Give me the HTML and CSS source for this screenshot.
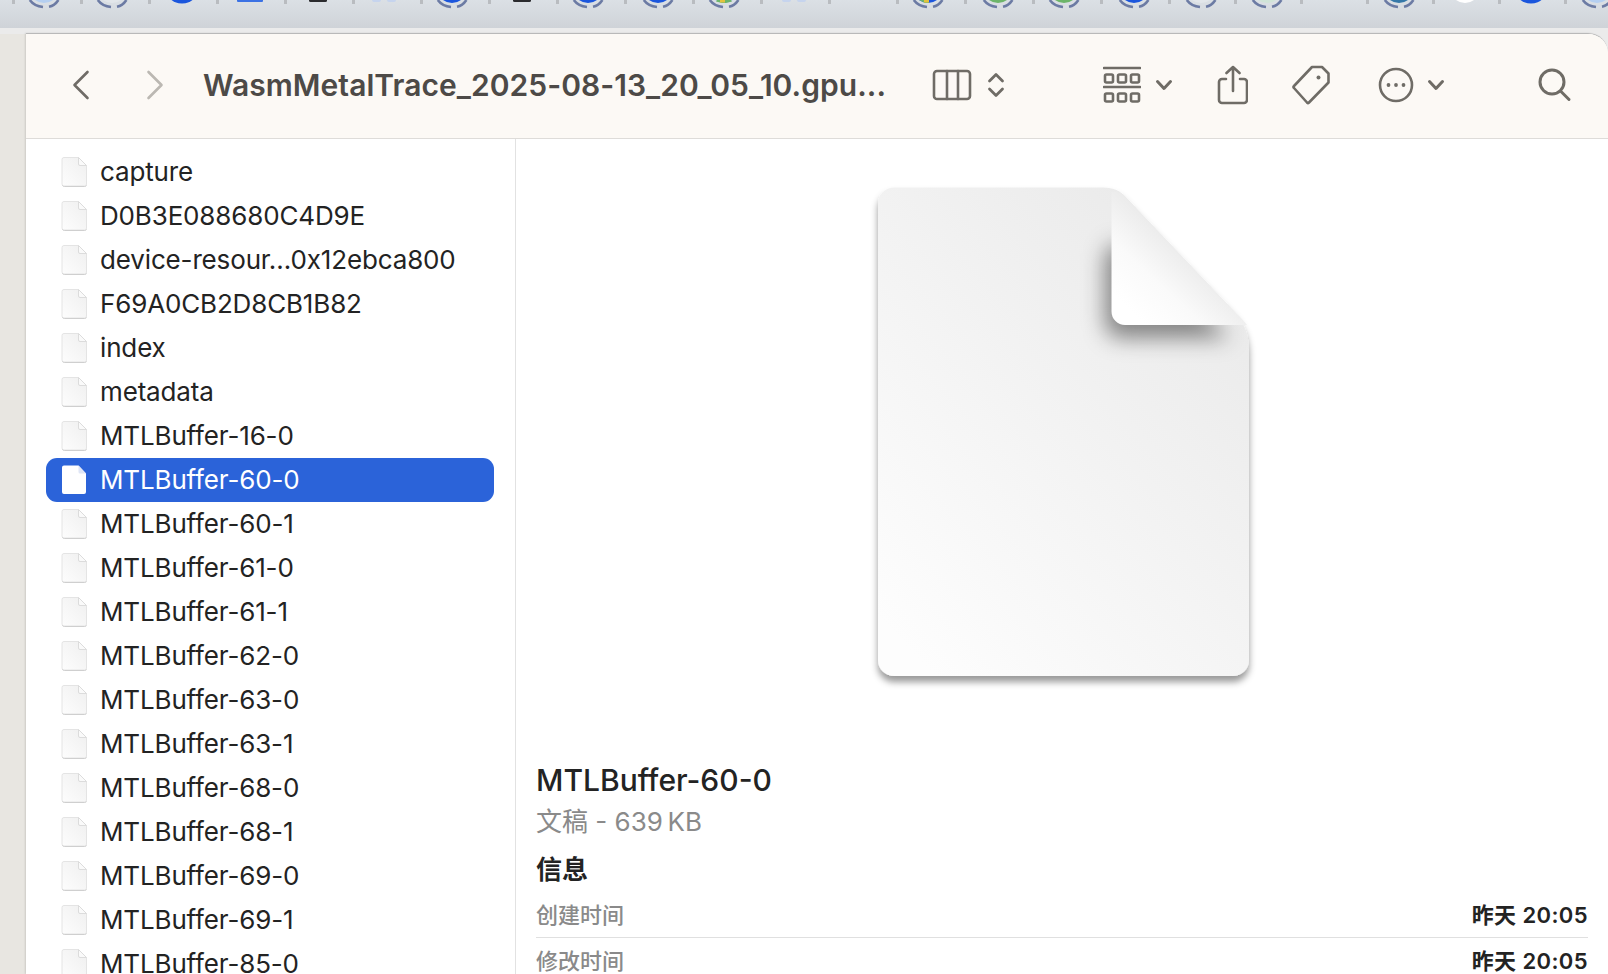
FILE: index.html
```html
<!doctype html>
<html>
<head>
    <meta charset="utf-8" />
    <title>WasmMetalTrace</title>
    <link rel="stylesheet" href="styles.css">
</head>
<body>
<svg class="defs" width="0" height="0">
    <defs>
        <linearGradient id="smallPage" x1="1" y1="0" x2="0" y2="1">
            <stop offset="0" stop-color="#efefef"/>
            <stop offset="1" stop-color="#fdfdfd"/>
        </linearGradient>
        <linearGradient id="bigPage" x1="0.95" y1="0" x2="0.15" y2="1">
            <stop offset="0" stop-color="#e8e8e8"/>
            <stop offset="1" stop-color="#fdfdfd"/>
        </linearGradient>
        <linearGradient id="bigFold" x1="0.15" y1="0.9" x2="0.72" y2="0.3">
            <stop offset="0" stop-color="#ffffff"/>
            <stop offset="0.35" stop-color="#fafafa"/>
            <stop offset="1" stop-color="#e0e0e0"/>
        </linearGradient>
        <filter id="pageShadow" x="-10%" y="-10%" width="120%" height="120%">
            <feDropShadow dx="0" dy="6" stdDeviation="3.500" flood-color="#000" flood-opacity=".4"/>
        </filter>
        <filter id="foldBlur" x="-40%" y="-40%" width="180%" height="180%">
            <feGaussianBlur stdDeviation="11"/>
        </filter>
        <clipPath id="pageClip">
            <path d="M36 17.500H242C252 17.500 260 19 265.700 25L372 137C383 148 391 160 391 180V490A16 16 0 0 1 375 506H36A16 16 0 0 1 20 490V33.500A16 16 0 0 1 36 17.500Z"/>
        </clipPath>
        <symbol id="ring" viewBox="0 0 40 28">
            <path class="ring-arc" d="M5.800 0C8.500 3.800 13 6.400 19 7"/>
            <path class="ring-arc" d="M25 6.800C29 6 32 3.600 34.400 0"/>
        </symbol>
        <symbol id="fileSmall" viewBox="0 0 28 32">
            <path d="M2 3.500A2 2 0 0 1 4 1.500H18.500L26.500 9.500V28A2 2 0 0 1 24.500 30H4A2 2 0 0 1 2 28Z" fill="url(#smallPage)" stroke="#e4e4e4" stroke-width="1"/>
            <path d="M2.500 29.500C3 30.400 3.500 30.500 4.500 30.500H24.500C25.500 30.500 26 30.400 26.500 29.500" fill="none" stroke="#cfcfcf" stroke-width="1"/>
            <path d="M18.500 1.500V8A1.500 1.500 0 0 0 20 9.500H26.500Z" fill="#fafafa" stroke="#dcdcdc" stroke-width="1"/>
        </symbol>
        <symbol id="fileSelected" viewBox="0 0 28 32">
            <path d="M2 3.500A2 2 0 0 1 4 1.500H18.500L26 9.500V28A2 2 0 0 1 24 30H4A2 2 0 0 1 2 28Z" fill="#fff"/>
            <path d="M18.500 1.500V8A1.500 1.500 0 0 0 20 9.500H26Z" fill="#dfe6f6"/>
        </symbol>
    </defs>
</svg>

<div class="tabs">
    <div class="tab"><svg class="fav ringed" viewBox="0 0 40 28"><circle class="c-sky" cx="20" cy="-12" r="15"/><use href="#ring"/></svg></div>
    <div class="tab"><svg class="fav ringed" viewBox="0 0 40 28"><circle class="c-mist" cx="20" cy="-12" r="15"/><use href="#ring"/></svg></div>
    <div class="tab"><svg class="fav" viewBox="0 0 40 28"><circle class="c-blue" cx="20" cy="-14" r="17.500"/></svg></div>
    <div class="tab"><svg class="fav" viewBox="0 0 40 28"><rect class="c-azure" x="7" y="-6" width="26" height="8" rx="1"/></svg></div>
    <div class="tab"><svg class="fav" viewBox="0 0 40 28"><rect class="c-dark" x="11" y="-6" width="18" height="8" rx="1.500"/></svg></div>
    <div class="tab"><svg class="fav ringed" viewBox="0 0 40 28"><rect class="c-pale" x="8" y="-6" width="9" height="8" rx="2"/><rect class="c-pale" x="23" y="-6" width="9" height="8" rx="2"/></svg></div>
    <div class="tab"><svg class="fav ringed" viewBox="0 0 40 28"><circle class="c-blue" cx="20" cy="-12" r="15"/><use href="#ring"/></svg></div>
    <div class="tab"><svg class="fav" viewBox="0 0 40 28"><rect class="c-dark" x="11" y="-6" width="18" height="8" rx="1.500"/></svg></div>
    <div class="tab"><svg class="fav ringed" viewBox="0 0 40 28"><circle class="c-blue" cx="20" cy="-12" r="15"/><use href="#ring"/></svg></div>
    <div class="tab"><svg class="fav" viewBox="0 0 40 28"><circle class="c-blue" cx="20" cy="-12" r="15"/><use href="#ring"/></svg></div>
    <div class="tab"><svg class="fav ringed" viewBox="0 0 40 28"><circle class="c-sky" cx="20" cy="-12" r="15"/><path class="c-green" d="M12 1.500L18 3H22L28 1.500L26 -2H14Z"/><rect class="c-gold" x="16" y="0" width="5" height="2.500"/><use href="#ring"/></svg></div>
    <div class="tab"><svg class="fav" viewBox="0 0 40 28"><rect class="c-pale" x="8" y="-6" width="9" height="8" rx="2"/><rect class="c-pale" x="23" y="-6" width="9" height="8" rx="2"/></svg></div>
    <div class="tab"></div>
    <div class="tab"><svg class="fav ringed" viewBox="0 0 40 28"><circle class="c-blue" cx="20" cy="-12" r="15"/><path class="c-green" d="M11 0L17 3H21L17 -2H11Z"/><rect class="c-gold" x="16" y="0" width="5" height="2.500"/><use href="#ring"/></svg></div>
    <div class="tab"><svg class="fav" viewBox="0 0 40 28"><circle class="c-green" cx="20" cy="-12" r="15"/><use href="#ring"/></svg></div>
    <div class="tab"><svg class="fav ringed" viewBox="0 0 40 28"><circle class="c-green" cx="20" cy="-12" r="15"/><use href="#ring"/></svg></div>
    <div class="tab"><svg class="fav" viewBox="0 0 40 28"><circle class="c-blue" cx="20" cy="-12" r="15"/><use href="#ring"/></svg></div>
    <div class="tab tab-narrow"><svg class="fav" viewBox="0 0 40 28"><circle class="c-mist" cx="20" cy="-12" r="15"/><use href="#ring"/></svg></div>
    <div class="tab tab-narrow"><svg class="fav" viewBox="0 0 40 28"><circle class="c-mint" cx="20" cy="-12" r="15"/><use href="#ring"/></svg></div>
    <div class="tab tab-narrow"></div>
    <div class="tab tab-narrow"><svg class="fav" viewBox="0 0 40 28"><circle class="c-teal" cx="20" cy="-12" r="15"/><use href="#ring"/></svg></div>
    <div class="tab tab-narrow"><svg class="fav" viewBox="0 0 40 28"><circle class="c-white" cx="20" cy="-12" r="15"/></svg></div>
    <div class="tab tab-narrow"><svg class="fav" viewBox="0 0 40 28"><circle class="c-blue" cx="20" cy="-14" r="17.500"/></svg></div>
    <div class="tab tab-narrow"><svg class="fav" viewBox="0 0 40 28"><circle class="c-sky" cx="20" cy="-12" r="15"/><use href="#ring"/></svg></div>
</div>
<div class="tabs-edge"></div>

<div class="desk">
    <div class="behind"></div>
    <div class="finder">
        <div class="toolbar">
            <svg class="tool back" width="18" height="30" viewBox="0 0 18 30"><path d="M15.500 2L2.500 15L15.500 28"/></svg>
            <svg class="tool forward" width="18" height="30" viewBox="0 0 18 30"><path d="M2.500 2L15.500 15L2.500 28"/></svg>
            <div class="path-title">WasmMetalTrace_2025-08-13_20_05_10.gpu...</div>
            <svg class="tool columns" width="40" height="32" viewBox="0 0 40 32"><rect x="2" y="2" width="36" height="28" rx="3"/><path d="M15 2V30M26 2V30"/></svg>
            <svg class="tool updown" width="18" height="30" viewBox="0 0 18 30"><path d="M2.500 11L9 4.500L15.500 11M2.500 19L9 25.500L15.500 19"/></svg>
            <svg class="tool grid" width="38" height="38" viewBox="0 0 38 38"><path d="M1 2H37M1 21H37"/><rect x="2" y="8.500" width="8" height="8" rx="1.500"/><rect x="15" y="8.500" width="8" height="8" rx="1.500"/><rect x="28" y="8.500" width="8" height="8" rx="1.500"/><rect x="2" y="27.500" width="8" height="8" rx="1.500"/><rect x="15" y="27.500" width="8" height="8" rx="1.500"/><rect x="28" y="27.500" width="8" height="8" rx="1.500"/></svg>
            <svg class="tool caret after-grid" width="18" height="12" viewBox="0 0 18 12"><path d="M2.500 2.500L9 9.500L15.500 2.500"/></svg>
            <svg class="tool share" width="32" height="40" viewBox="0 0 32 40"><path d="M10 14H6A3 3 0 0 0 3 17V35A3 3 0 0 0 6 38H28A3 3 0 0 0 31 35V17A3 3 0 0 0 28 14H24M17 26V2M10.500 8L17 2L23.500 8"/></svg>
            <svg class="tool tag" width="40" height="40" viewBox="0 0 40 40"><path d="M21 2H31L37.500 8.500V17.500L18 37.500Q17 38.500 16 37.500L3 23Q2 22 3 21Z"/><circle class="dot" cx="27.500" cy="12.500" r="2"/></svg>
            <svg class="tool more" width="36" height="36" viewBox="0 0 36 36"><circle cx="18" cy="18" r="16"/><circle class="dot" cx="10.500" cy="18" r="1.900"/><circle class="dot" cx="18" cy="18" r="1.900"/><circle class="dot" cx="25.500" cy="18" r="1.900"/></svg>
            <svg class="tool caret after-more" width="18" height="12" viewBox="0 0 18 12"><path d="M2.500 2.500L9 9.500L15.500 2.500"/></svg>
            <svg class="tool search" width="34" height="34" viewBox="0 0 34 34"><circle cx="14" cy="14" r="12"/><path d="M22.500 23L31 31.500"/></svg>
        </div>
        <div class="content">
            <ul class="files">
                <li class="file"><svg class="file-icon"><use href="#fileSmall"/></svg>capture</li>
                <li class="file"><svg class="file-icon"><use href="#fileSmall"/></svg>D0B3E088680C4D9E</li>
                <li class="file"><svg class="file-icon"><use href="#fileSmall"/></svg>device-resour…0x12ebca800</li>
                <li class="file"><svg class="file-icon"><use href="#fileSmall"/></svg>F69A0CB2D8CB1B82</li>
                <li class="file"><svg class="file-icon"><use href="#fileSmall"/></svg>index</li>
                <li class="file"><svg class="file-icon"><use href="#fileSmall"/></svg>metadata</li>
                <li class="file"><svg class="file-icon"><use href="#fileSmall"/></svg>MTLBuffer-16-0</li>
                <li class="file selected"><svg class="file-icon"><use href="#fileSelected"/></svg>MTLBuffer-60-0</li>
                <li class="file"><svg class="file-icon"><use href="#fileSmall"/></svg>MTLBuffer-60-1</li>
                <li class="file"><svg class="file-icon"><use href="#fileSmall"/></svg>MTLBuffer-61-0</li>
                <li class="file"><svg class="file-icon"><use href="#fileSmall"/></svg>MTLBuffer-61-1</li>
                <li class="file"><svg class="file-icon"><use href="#fileSmall"/></svg>MTLBuffer-62-0</li>
                <li class="file"><svg class="file-icon"><use href="#fileSmall"/></svg>MTLBuffer-63-0</li>
                <li class="file"><svg class="file-icon"><use href="#fileSmall"/></svg>MTLBuffer-63-1</li>
                <li class="file"><svg class="file-icon"><use href="#fileSmall"/></svg>MTLBuffer-68-0</li>
                <li class="file"><svg class="file-icon"><use href="#fileSmall"/></svg>MTLBuffer-68-1</li>
                <li class="file"><svg class="file-icon"><use href="#fileSmall"/></svg>MTLBuffer-69-0</li>
                <li class="file"><svg class="file-icon"><use href="#fileSmall"/></svg>MTLBuffer-69-1</li>
                <li class="file"><svg class="file-icon"><use href="#fileSmall"/></svg>MTLBuffer-85-0</li>
            </ul>
            <div class="preview">
                <svg class="big-icon" width="416" height="530" viewBox="0 0 416 530">
                    <path filter="url(#pageShadow)" fill="url(#bigPage)" d="M36 17.500H242C252 17.500 260 19 265.700 25L372 137C383 148 391 160 391 180V490A16 16 0 0 1 375 506H36A16 16 0 0 1 20 490V33.500A16 16 0 0 1 36 17.500Z"/>
                    <g clip-path="url(#pageClip)">
                        <path filter="url(#foldBlur)" fill="#000" fill-opacity=".45" d="M247 85V150Q247 168 265 168H372L296 95L258 72Z"/>
                    </g>
                    <path fill="url(#bigFold)" d="M253.500 22C259 22 262 22 265.700 25L372 137C379 144 385 150 389 155H267A13.500 13.500 0 0 1 253.500 141.500Z"/>
                </svg>
                <div class="name">MTLBuffer-60-0</div>
                <div class="kind">文稿 - 639&thinsp;KB</div>
                <div class="info-head">信息</div>
                <div class="info-row"><span class="info-label">创建时间</span><span class="info-value">昨天 20:05</span></div>
                <div class="info-row"><span class="info-label">修改时间</span><span class="info-value">昨天 20:05</span></div>
            </div>
        </div>
    </div>
</div>
</body>
</html>
```

FILE: styles.css
```css
*{
    margin:0px;
    padding:0px;
    box-sizing:border-box;
}
html,body{
    width:100%;
    height:100%;
    overflow:hidden;
    background-color:#ebebeb;
    font-family:"Inter","Noto Sans CJK SC",sans-serif;
}
ul{
    list-style:none;
}
.defs{
    display:block;
}

/* browser tabs behind the window */
.tabs{
    display:flex;
    height:28px;
    padding-left:12px;
    background:linear-gradient(#dbe0e5,#cfd3d8);
}
.tab{
    width:68px;
    height:28px;
    flex:none;
    background:linear-gradient(#b9bcc0,#b9bcc0) left top/3px 4px no-repeat;
}
.tab-narrow{
    width:66px;
}
.fav{
    display:block;
    width:40px;
    height:28px;
    margin:0px auto;
}
.fav.ringed{
    margin-left:12px;
}
.ring-arc{
    fill:none;
    stroke:#6c7ba4;
    stroke-width:2.6;
}
.c-blue{fill:#1b56dd;}
.c-azure{fill:#3c72e4;}
.c-dark{fill:#2b2b2e;}
.c-pale{fill:#c6d4ee;}
.c-sky{fill:#b5cff0;}
.c-mist{fill:#e2e6ea;}
.c-green{fill:#6db56a;}
.c-gold{fill:#e3c33f;}
.c-mint{fill:#d0e4d8;}
.c-teal{fill:#3578a8;}
.c-white{fill:#fff;}
.tabs-edge{
    height:5px;
    background-color:#ebebeb;
}

/* finder window */
.desk{
    display:flex;
    height:941px;
}
.behind{
    width:26px;
    flex:none;
    margin-top:1px;
    background-color:#e8e6e1;
}
.finder{
    flex:1;
    min-width:0;
    background-color:#fff;
    border-top:1px solid #b9b9b9;
    border-top-right-radius:20px;
    overflow:hidden;
    box-shadow:-1px 0px 2px rgba(0,0,0,.12);
}
.toolbar{
    display:flex;
    align-items:center;
    height:105px;
    padding:0px 0px 2px 46px;
    background-color:#fcf9f5;
    border-bottom:1px solid #dedcd9;
}
.tool{
    display:block;
    flex:none;
    fill:none;
    stroke:#6f6c66;
    stroke-width:2.6;
    stroke-linecap:round;
    stroke-linejoin:round;
}
.tool .dot{
    fill:#6f6c66;
    stroke:none;
}
.forward{margin-left:56px;stroke:#bbb8b2;}
.path-title{
    width:682px;
    flex:none;
    margin-left:39px;
    font-size:30px;
    font-weight:600;
    letter-spacing:.05px;
    color:#4d4a47;
    white-space:nowrap;
}
.columns{margin-left:47px;}
.updown{margin-left:15px;stroke-width:2.800;}
.grid{margin-left:98px;}
.after-grid{margin-left:14px;stroke-width:3;}
.share{margin-left:43px;}
.tag{margin-left:43px;}
.more{margin-left:47px;}
.after-more{margin-left:13px;stroke-width:3;}
.search{margin-left:93px;stroke-width:3;}

.content{
    display:flex;
    height:835px;
}
.files{
    width:490px;
    flex:none;
    padding:11px 21px 0px 20px;
    border-right:1px solid #e2e2e2;
}
.file{
    display:flex;
    align-items:center;
    height:44px;
    padding:0px 0px 2px 14px;
    border-radius:11px;
    font-size:26px;
    letter-spacing:-.15px;
    color:#232323;
    white-space:nowrap;
}
.file.selected{
    background-color:#2b63d9;
    color:#fff;
}
.file-icon{
    width:28px;
    height:32px;
    margin:2px 12px 0px 0px;
    flex:none;
}

/* preview pane */
.preview{
    flex:1;
    min-width:0;
    padding:31px 20px 0px;
}
.big-icon{
    display:block;
    margin-left:322px;
}
.name{
    margin-top:62px;
    height:36px;
    line-height:36px;
    font-size:30px;
    font-weight:500;
    color:#232323;
}
.kind{
    margin-top:8px;
    height:32px;
    line-height:32px;
    font-size:26px;
    color:#8a8a8a;
}
.info-head{
    margin:15px 0px 5px;
    height:34px;
    line-height:34px;
    font-size:26px;
    font-weight:700;
    color:#232323;
}
.info-row{
    display:flex;
    justify-content:space-between;
    align-items:center;
    height:46px;
    padding-bottom:4px;
    font-size:22px;
    border-bottom:1px solid #e0e0e0;
}
.info-label{
    color:#8a8a8a;
    font-weight:500;
}
.info-value{
    color:#232323;
    font-weight:600;
    letter-spacing:.4px;
}
```
